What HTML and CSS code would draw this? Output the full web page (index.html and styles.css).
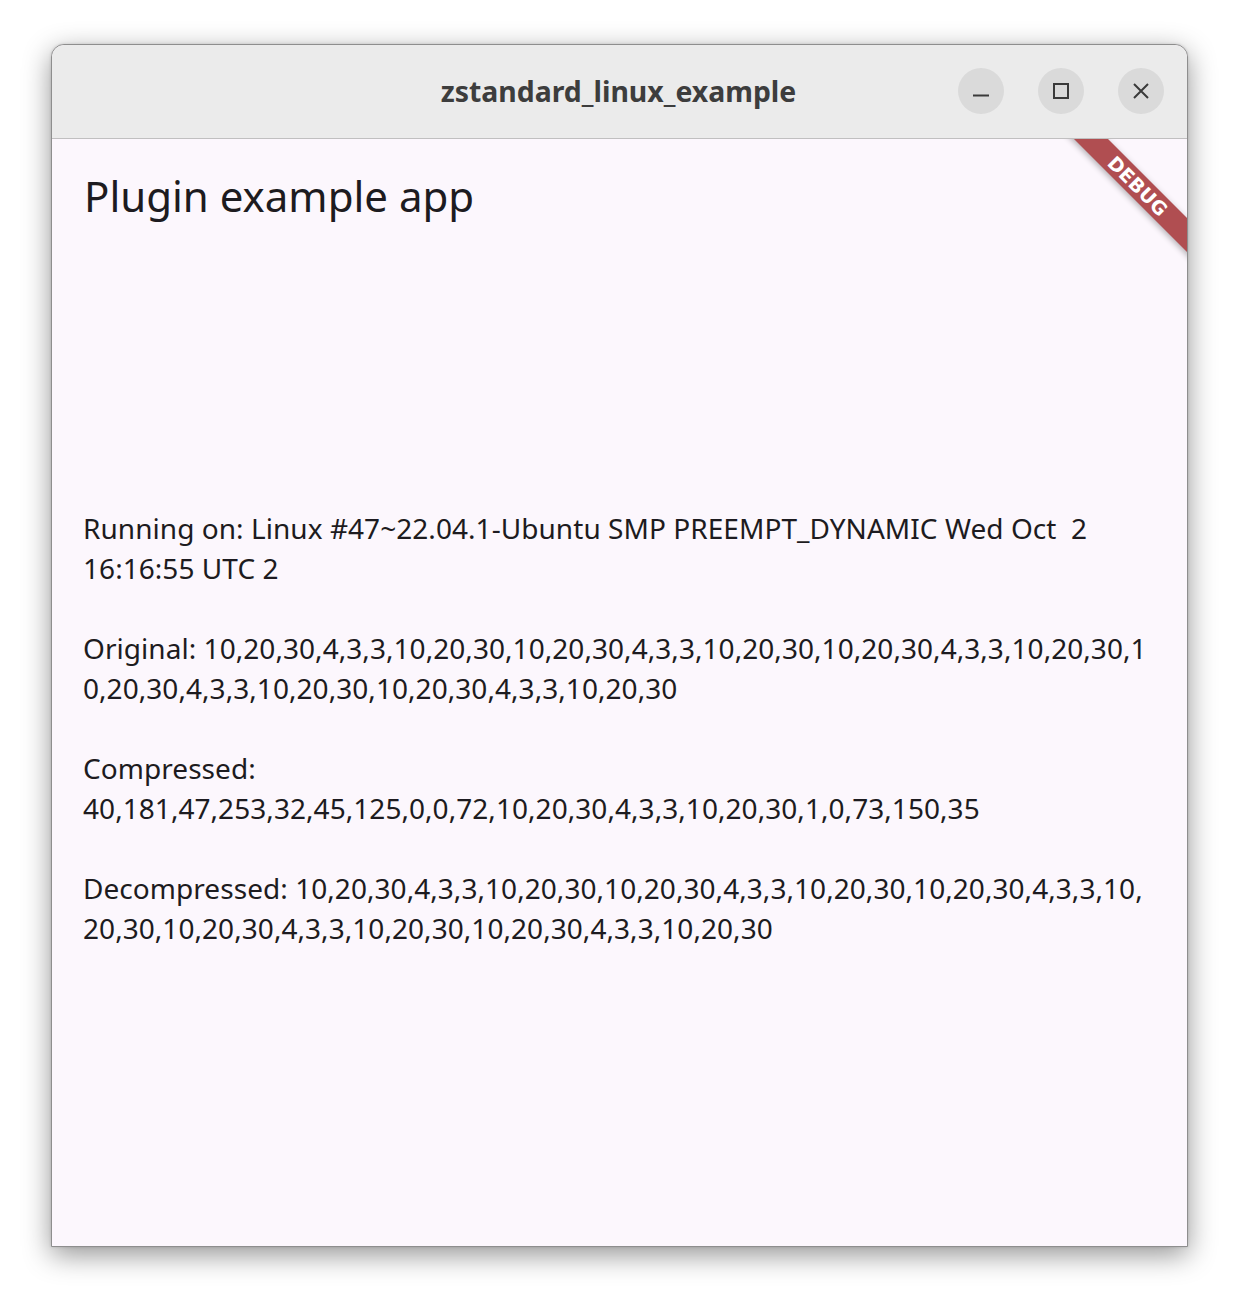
FILE: index.html
```html
<!DOCTYPE html>
<html>
<head>
<meta charset="utf-8">
<link rel="stylesheet" href="styles.css">
</head>
<body>
<div class="window">
  <header class="titlebar">
    <div class="title">zstandard_linux_example</div>
    <div class="controls">
      <button class="ctl" aria-label="Minimize">
        <svg width="16" height="16" viewBox="0 0 16 16"><path d="M0 12.5H16" stroke="#3a3a3a" stroke-width="2" fill="none"/></svg>
      </button>
      <button class="ctl" aria-label="Maximize">
        <svg width="16" height="16" viewBox="0 0 16 16"><rect x="1" y="1" width="14" height="14" stroke="#3a3a3a" stroke-width="2" fill="none"/></svg>
      </button>
      <button class="ctl" aria-label="Close">
        <svg width="16" height="16" viewBox="0 0 16 16"><path d="M1 1L15 15M15 1L1 15" stroke="#3a3a3a" stroke-width="2" fill="none"/></svg>
      </button>
    </div>
  </header>
  <main class="content">
    <h1 class="apptitle">Plugin example app</h1>
    <div class="output">Running on: Linux #47~22.04.1-Ubuntu SMP PREEMPT_DYNAMIC Wed Oct  2<br>16:16:55 UTC 2<br><br>Original: 10,20,30,4,3,3,10,20,30,10,20,30,4,3,3,10,20,30,10,20,30,4,3,3,10,20,30,1<br>0,20,30,4,3,3,10,20,30,10,20,30,4,3,3,10,20,30<br><br>Compressed:<br>40,181,47,253,32,45,125,0,0,72,10,20,30,4,3,3,10,20,30,1,0,73,150,35<br><br>Decompressed: 10,20,30,4,3,3,10,20,30,10,20,30,4,3,3,10,20,30,10,20,30,4,3,3,10,<br>20,30,10,20,30,4,3,3,10,20,30,10,20,30,4,3,3,10,20,30</div>
    <div class="banner">DEBUG</div>
  </main>
</div>
</body>
</html>
```
FILE: styles.css
```css
html, body {
  margin: 0;
  padding: 0;
  background: #ffffff;
}
body {
  padding: 44px 0 0 51px;
  height: 1304px;
  box-sizing: border-box;
  overflow: hidden;
}
.window {
  width: 1137px;
  height: 1203px;
  box-sizing: border-box;
  border: 1px solid #8e8e8e;
  border-radius: 13px 13px 0 0;
  background: #fcf7fd;
  box-shadow: 0 8px 28px rgba(0, 0, 0, 0.42), 0 0 3px rgba(0,0,0,0.15);
  display: flex;
  flex-direction: column;
  overflow: hidden;
}
.titlebar {
  height: 94px;
  flex: none;
  box-sizing: border-box;
  background: #ebebeb;
  border-bottom: 1px solid #c0bfc0;
  border-radius: 12px 12px 0 0;
  display: flex;
  align-items: center;
  justify-content: center;
  position: relative;
}
.title {
  font-family: "Noto Sans", "Open Sans", sans-serif;
  font-weight: 700;
  font-size: 28.4px;
  color: #3d3d3d;
  margin-left: -2px;
  margin-top: -2px;
}
.controls {
  position: absolute;
  right: 23px;
  top: 23px;
  display: flex;
  gap: 34px;
}
.ctl {
  width: 46px;
  height: 46px;
  border-radius: 50%;
  border: none;
  padding: 0;
  background: #dadada;
  display: flex;
  align-items: center;
  justify-content: center;
}
.content {
  flex: 1;
  position: relative;
  overflow: hidden;
  padding: 0 31px;
  font-family: "Noto Sans", "Open Sans", sans-serif;
  color: #1d1b20;
}
.apptitle {
  margin: 29px 0 0 1px;
  font-weight: 400;
  font-size: 42px;
  line-height: 56px;
  letter-spacing: 0;
}
.output {
  margin-top: 284px;
  font-size: 28px;
  line-height: 40px;
  letter-spacing: 0.05px;
  white-space: pre;
}
.banner {
  position: absolute;
  left: 986px;
  top: 35px;
  width: 200px;
  height: 24px;
  line-height: 24px;
  transform: rotate(45deg);
  background: #b04e51;
  color: #ffffff;
  font-family: "DejaVu Sans", sans-serif;
  font-weight: 700;
  font-size: 19px;
  letter-spacing: 0.3px;
  text-align: center;
  box-shadow: 0 2px 6px rgba(0,0,0,0.3);
}
```
